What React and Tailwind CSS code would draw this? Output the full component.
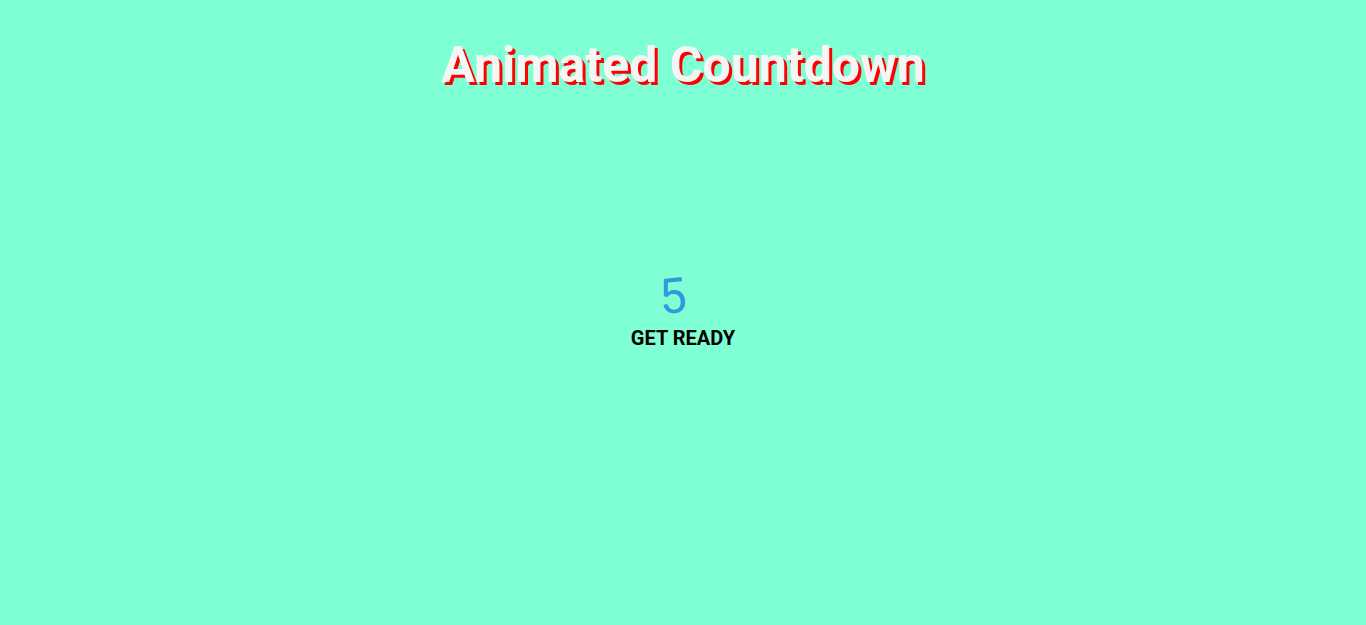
export default function App() {
  return (
    <div
      className="h-[625px] w-full bg-[#7fffd4] flex flex-col items-center overflow-hidden"
      style={{ fontFamily: "Roboto, 'Liberation Sans', sans-serif" }}
    >
      <h1 className="mt-[28px] text-[50px] leading-normal font-bold text-[#f5f5f5] [text-shadow:3px_3px_0_#ff0000]">
        Animated Countdown
      </h1>
      <div className="mt-[169px] flex flex-col items-center">
        <span className="block -translate-x-[10px] -rotate-6 text-[49px] leading-none text-[#3498db]">5</span>
        <h4 className="mt-[2px] text-[20px] leading-normal font-bold uppercase text-black">
          Get Ready
        </h4>
      </div>
    </div>
  );
}
